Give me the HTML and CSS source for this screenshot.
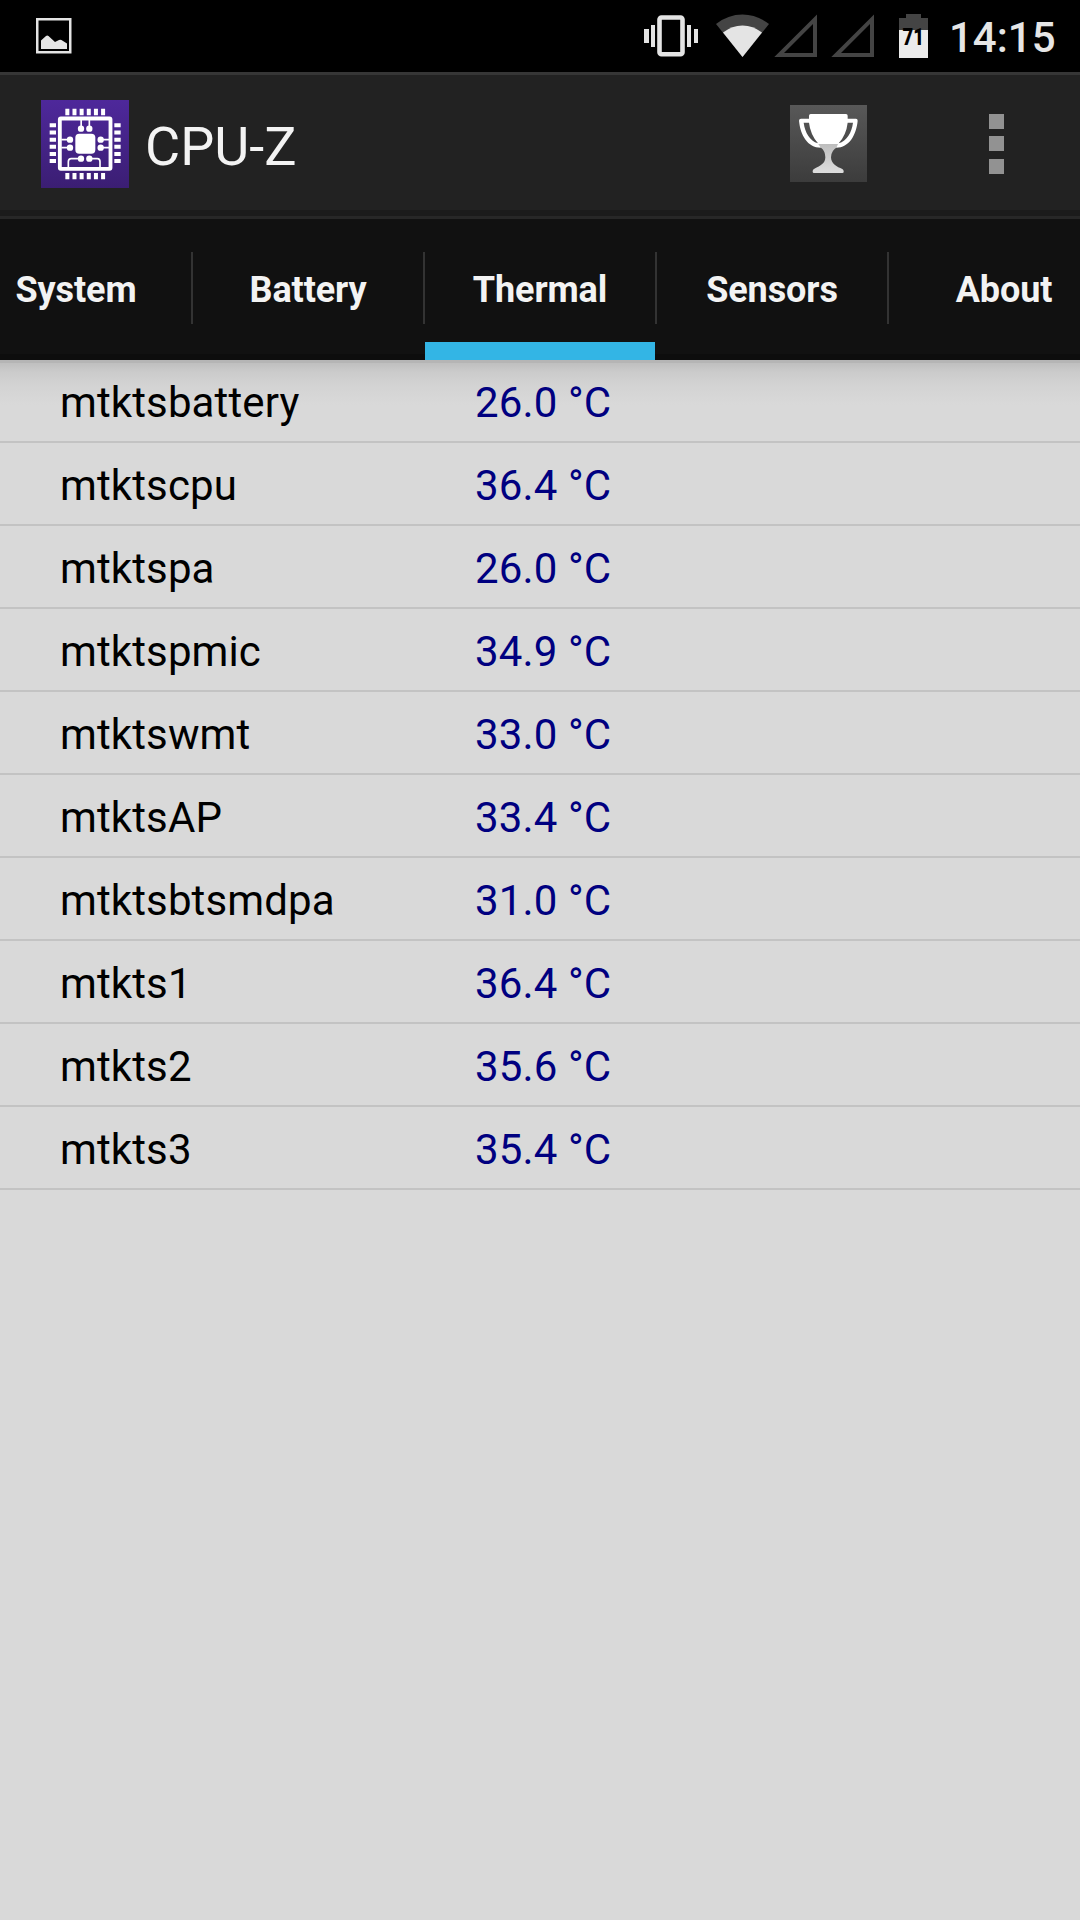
FILE: index.html
```html
<!DOCTYPE html>
<html lang="en">
<head>
<meta charset="utf-8">
<title>CPU-Z</title>
<link rel="stylesheet" href="styles.css">
</head>
<body>
<header class="status">
  <svg class="status-picture" width="36" height="36" viewBox="36 18 36 36"><rect x="37.25" y="19.25" width="33" height="33" fill="none" stroke="#e4e4e4" stroke-width="2.5"/><path d="M41 40.5L46 36Q47.2 35 48.5 36L55 42l4-2q1.200-.6 2.400 0L67 43.500V49H41z" fill="#e4e4e4"/></svg>
  <svg class="status-vibrate" width="54" height="72" viewBox="644 0 54 72" fill="#e4e4e4"><path d="M644 29h5v14h-5zM651 25h4v22h-4zM687 25h4v22h-4zM694 29h4v14h-4z"/><rect x="659.500" y="17.500" width="23" height="36.700" rx="2" fill="none" stroke="#e4e4e4" stroke-width="4.600"/></svg>
  <svg class="status-wifi" width="54" height="72" viewBox="716 0 54 72"><path d="M742.500 57L716 24Q728 14.500 742.500 14.500T769 24z" fill="#444"/><path d="M742.500 57L723 32.500Q732 25.500 742.500 25.500T762 32.500z" fill="#e4e4e4"/></svg>
  <svg class="status-signal" width="43" height="72" viewBox="774 0 43 72"><path d="M774.300 57H817V14.500zM784 53H813V24z" fill="#444" fill-rule="evenodd"/></svg>
  <svg class="status-signal" width="43" height="72" viewBox="774 0 43 72"><path d="M774.300 57H817V14.500zM784 53H813V24z" fill="#444" fill-rule="evenodd"/></svg>
  <svg class="status-battery" width="29" height="72" viewBox="899 0 29 72"><path d="M906 14h15v4h7v12h-29V18h7z" fill="#444"/><path d="M899 30h29v28h-29z" fill="#ebebeb"/><text class="battery-level" x="902.500" y="44.600" textLength="21.500" lengthAdjust="spacingAndGlyphs">71</text></svg>
  <span class="clock">14:15</span>
</header>

<div class="appbar">
  <svg class="app-icon" width="88" height="88" viewBox="33 30 264 264">
    <defs><linearGradient id="purple" x2="0" y2="1"><stop stop-color="#4e289b"/><stop offset="1" stop-color="#3b1e73"/></linearGradient></defs>
    <path d="M33 30h264v264H33z" fill="url(#purple)"/>
    <g fill="none" stroke="#fff">
      <rect x="89.500" y="85.500" width="152" height="151" rx="3" stroke-width="11.500"/>
      <path stroke-width="19" stroke-dasharray="12 9.450" d="M106 66H226M106 258.500H226M68.500 100V220M262.500 100V220"/>
      <path stroke-width="5" d="M153.500 90v26M178 90v26M94 149h26M94 173h26M212 149h26M212 173h26M153 206h-29q-9 0-9 9v20M178 206h24q8 0 8 9v20"/>
    </g>
    <g fill="#fff"><rect x="136" y="131" width="60" height="60" rx="12"/>
      <circle cx="153" cy="116" r="9.500"/><circle cx="178" cy="116" r="9.500"/><circle cx="120" cy="149" r="9.500"/><circle cx="120" cy="173" r="9.500"/><circle cx="212" cy="149" r="9.500"/><circle cx="212" cy="173" r="9.500"/><circle cx="153" cy="206" r="9.500"/><circle cx="178" cy="206" r="9.500"/></g>
  </svg>
  <h1 class="app-title">CPU-Z</h1>
  <svg class="trophy" width="77" height="77" viewBox="30 30 231 231">
    <defs>
      <linearGradient id="tile" x2="0" y2="1"><stop stop-color="#585858"/><stop offset="1" stop-color="#3c3c3c"/></linearGradient>
      <linearGradient id="stem" x2="0" y2="1"><stop stop-color="#bdbdbd"/><stop offset="1" stop-color="#dedede"/></linearGradient>
    </defs>
    <path d="M30 30h231v231H30z" fill="url(#tile)"/>
    <path d="M113 147H177L172 156Q153 167 153 187C153 206 171 216 187 222Q191 224 191 229V231Q191 234 187 234H102Q98 234 98 230V228Q98 224 103 221C122 212 136 205 136 187Q136 168 123 158z" fill="url(#stem)"/>
    <path d="M92 57H198Q203 57 203 62V71H228Q233 71 233 77C229 120 207 158 169 158L174 147H115L123 158C82 158 61 119 57 77Q57 71 63 71H87V62Q87 57 92 57zM71 83C75 113 89 137 114 145Q91 118 87 83zM219 83H203Q199 119 176 145C201 137 215 113 219 83z" fill="#fff"/>
  </svg>
  <svg class="overflow" width="15" height="60" viewBox="0 0 15 60"><path d="M0 0h15v15H0zM0 22h15v15H0zM0 45h15v15H0z" fill="#929292"/></svg>
</div>

<nav class="tabs">
  <a class="tab">System</a>
  <a class="tab">Battery</a>
  <a class="tab active">Thermal</a>
  <a class="tab">Sensors</a>
  <a class="tab">About</a>
</nav>

<main class="readings">
  <div class="row"><span>mtktsbattery</span><span class="value">26.0 °C</span></div>
  <div class="row"><span>mtktscpu</span><span class="value">36.4 °C</span></div>
  <div class="row"><span>mtktspa</span><span class="value">26.0 °C</span></div>
  <div class="row"><span>mtktspmic</span><span class="value">34.9 °C</span></div>
  <div class="row"><span>mtktswmt</span><span class="value">33.0 °C</span></div>
  <div class="row"><span>mtktsAP</span><span class="value">33.4 °C</span></div>
  <div class="row"><span>mtktsbtsmdpa</span><span class="value">31.0 °C</span></div>
  <div class="row"><span>mtkts1</span><span class="value">36.4 °C</span></div>
  <div class="row"><span>mtkts2</span><span class="value">35.6 °C</span></div>
  <div class="row"><span>mtkts3</span><span class="value">35.4 °C</span></div>
</main>
</body>
</html>
```

FILE: styles.css
```css
* { box-sizing: border-box; }

body {
  margin: 0;
  width: 1080px;
  height: 1920px;
  display: flex;
  flex-direction: column;
  overflow: hidden;
  background: #d9d9d9;
  font-family: Roboto, sans-serif;
}

svg { display: block; flex: none; }

.status {
  height: 72px;
  flex: none;
  display: flex;
  align-items: center;
  padding: 0 24px 0 36px;
  background: #000;
}
.status-picture { margin-right: auto; }
.status-vibrate { margin-right: 18px; }
.status-wifi { margin-right: 4px; }
.status-signal { margin-right: 14px; }
.status-signal + .status-battery { margin-left: 11px; }
.status-battery { margin-right: 21px; }
.battery-level { font-size: 23px; font-weight: 900; fill: #000; }
.clock {
  width: 107px;
  padding-top: 3px;
  font-size: 42px;
  font-weight: 500;
  line-height: 69px;
  color: #e6e6e6;
}

.appbar {
  height: 147px;
  flex: none;
  display: flex;
  align-items: center;
  padding: 3px 76px 0 41px;
  border-top: 3px solid #363636;
  border-bottom: 3px solid #272727;
  background: linear-gradient(#222 135px, #1b1b1b 135px);
}
.app-icon, .overflow { margin-bottom: 6px; }
.app-title {
  margin: 0 auto 0 16px;
  font-size: 54px;
  font-weight: 400;
  line-height: 64px;
  color: #f3f3f3;
}
.trophy { margin: 0 122px 7px 0; }

.tabs {
  height: 141px;
  flex: none;
  display: flex;
  margin-left: -39px;
  background: linear-gradient(#111 135px, #0d0d0d 135px);
}
.tab {
  flex: none;
  width: 232px;
  padding: 1px 2px 0 0;
  text-align: center;
  font-size: 36px;
  font-weight: 700;
  line-height: 141px;
  letter-spacing: -0.1px;
  color: #f3f3f3;
  background: linear-gradient(#333, #333) right 33px / 2px 72px no-repeat;
}
.tab.active {
  background:
    linear-gradient(#333, #333) right 33px / 2px 72px no-repeat,
    linear-gradient(#33b5e5, #33b5e5) left bottom / 230px 18px no-repeat;
}

.readings {
  flex: 1;
  background: linear-gradient(#b5b5b5 0, #b5b5b5 3px, #bfbfbf 3px, #cbcbcb 12px, #d3d3d3 25px, #d9d9d9 45px);
}
.row {
  height: 83px;
  display: grid;
  grid-template-columns: 415px 1fr;
  padding: 4px 0 0 60px;
  border-bottom: 2px solid #c3c3c3;
  font-size: 42px;
  line-height: 77px;
  letter-spacing: 0.12px;
  color: #000;
}
.value { color: #000080; }
```
